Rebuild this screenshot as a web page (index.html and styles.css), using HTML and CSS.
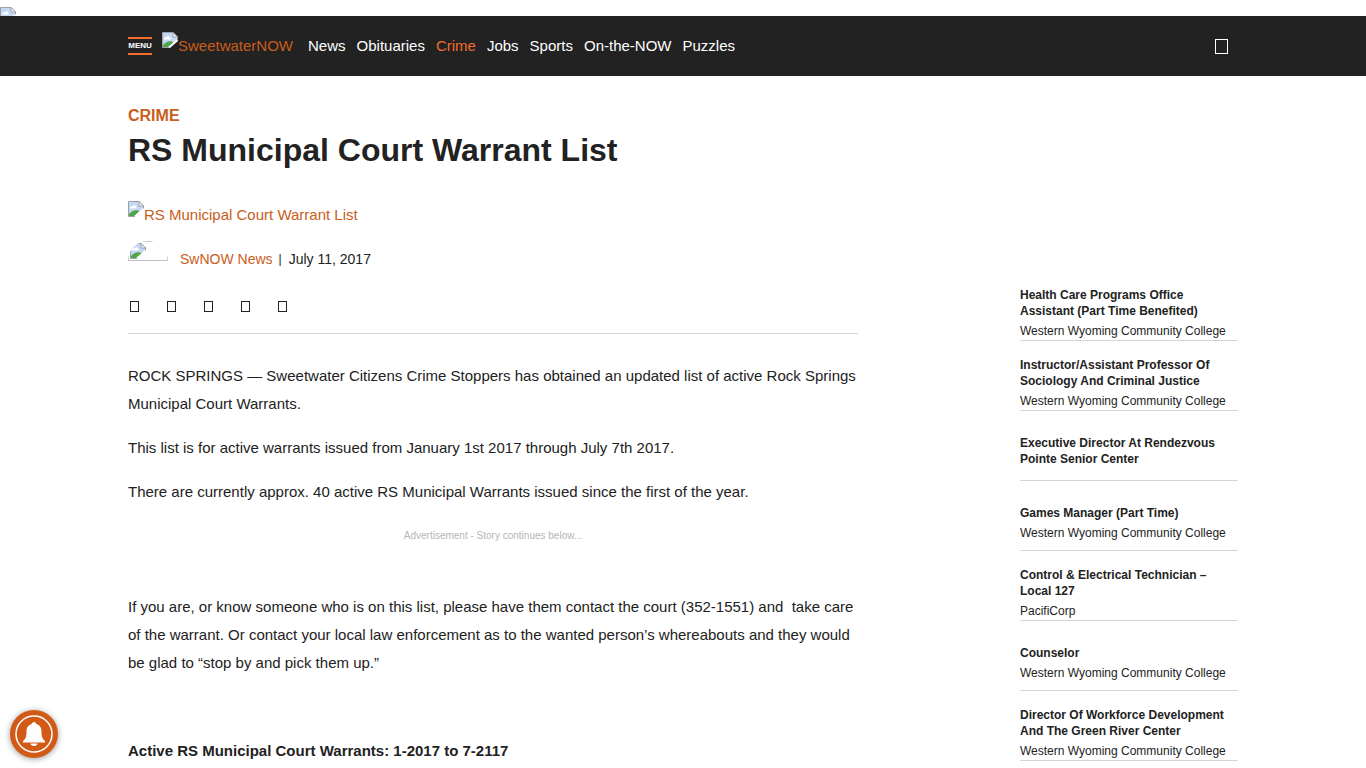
FILE: index.html
```html
<!DOCTYPE html>
<html lang="en">
<head>
<meta charset="utf-8">
<title>RS Municipal Court Warrant List - SweetwaterNOW</title>
<meta name="viewport" content="width=device-width, initial-scale=1">
<link rel="stylesheet" href="styles.css">
</head>
<body>
<svg width="0" height="0" class="defs" aria-hidden="true">
  <symbol id="missing" viewBox="0 0 16 16">
    <path d="M0.500 15.500V0.500H11L15.500 5V15.500Z" fill="#c6d7f5" stroke="#9aa0a6"/>
    <path d="M2 7.500C2 5.500 3.500 5 4.500 5.500C5.500 3.500 8.500 4 8.500 6.500V7.500Z" fill="#fff"/>
    <path d="M1 15V13C4 9.500 7 8.500 10 9.500L13 11V15Z" fill="#4ea64a"/>
    <path d="M7 16L16 7V16Z" fill="var(--back)"/>
    <path d="M7 15.500L15.500 8" stroke="#fff" stroke-width="2"/>
    <path d="M11 0.500V5H15.500Z" fill="#fff" stroke="#9aa0a6"/>
  </symbol>
</svg>
<div class="banner"><svg class="missing"><use href="#missing"/></svg></div>
<header class="topbar">
  <div class="container topbar-inner">
    <button class="menu" type="button">MENU</button>
    <a class="logo" href="#"><svg class="missing"><use href="#missing"/></svg>SweetwaterNOW</a>
    <nav class="nav" aria-label="Main">
      <a href="#">News</a>
      <a href="#">Obituaries</a>
      <a class="current" href="#">Crime</a>
      <a href="#">Jobs</a>
      <a href="#">Sports</a>
      <a href="#">On-the-NOW</a>
      <a href="#">Puzzles</a>
    </nav>
    <button class="search" type="button" aria-label="Search"><span class="glyph glyph-large"></span></button>
  </div>
</header>
<div class="container page">
  <main class="article">
    <a class="category" href="#">CRIME</a>
    <h1>RS Municipal Court Warrant List</h1>
    <a class="feature" href="#"><svg class="missing"><use href="#missing"/></svg>RS Municipal Court Warrant List</a>
    <div class="byline">
      <span class="avatar"><span class="avatar-frame"><svg class="missing"><use href="#missing"/></svg></span></span>
      <a href="#">SwNOW News</a>
      <span class="bar">|</span>
      <time datetime="2017-07-11">July 11, 2017</time>
    </div>
    <div class="share">
      <a href="#" aria-label="Facebook"><span class="glyph"></span></a>
      <a href="#" aria-label="Twitter"><span class="glyph"></span></a>
      <a href="#" aria-label="LinkedIn"><span class="glyph"></span></a>
      <a href="#" aria-label="Email"><span class="glyph"></span></a>
      <a href="#" aria-label="Print"><span class="glyph"></span></a>
    </div>
    <div class="story">
      <p>ROCK SPRINGS — Sweetwater Citizens Crime Stoppers has obtained an updated list of active Rock Springs Municipal Court Warrants.</p>
      <p>This list is for active warrants issued from January 1st 2017 through July 7th 2017.</p>
      <p>There are currently approx. 40 active RS Municipal Warrants issued since the first of the year.</p>
      <div class="ad">Advertisement - Story continues below...</div>
      <p>If you are, or know someone who is on this list, please have them contact the court (352-1551) and &nbsp;take care of the warrant. Or contact your local law enforcement as to the wanted person’s whereabouts and they would be glad to “stop by and pick them up.”</p>
      <p>&nbsp;</p>
      <p><strong>Active RS Municipal Court Warrants: 1-2017 to 7-2117</strong></p>
    </div>
  </main>
  <aside class="jobs" aria-label="Jobs">
    <a class="job" href="#"><strong>Health Care Programs Office Assistant (Part Time Benefited)</strong><span>Western Wyoming Community College</span></a>
    <a class="job" href="#"><strong>Instructor/Assistant Professor Of Sociology And Criminal Justice</strong><span>Western Wyoming Community College</span></a>
    <a class="job" href="#"><strong>Executive Director At Rendezvous Pointe Senior Center</strong><span></span></a>
    <a class="job" href="#"><strong>Games Manager (Part Time)</strong><span>Western Wyoming Community College</span></a>
    <a class="job" href="#"><strong>Control &amp; Electrical Technician – Local 127</strong><span>PacifiCorp</span></a>
    <a class="job" href="#"><strong>Counselor</strong><span>Western Wyoming Community College</span></a>
    <a class="job" href="#"><strong>Director Of Workforce Development And The Green River Center</strong><span>Western Wyoming Community College</span></a>
  </aside>
</div>
<button class="bell" type="button" aria-label="Notifications">
  <svg viewBox="0 0 48 48" width="48" height="48">
    <circle cx="24" cy="24" r="18" fill="none" stroke="#fff" stroke-width="1.500"/>
    <path d="M24 12C25.500 12 26 13 26.200 14C30 15 31.500 18 31.500 21.500C31.500 27 32.500 29 35 31V32.500H13V31C15.500 29 16.500 27 16.500 21.500C16.500 18 18 15 21.800 14C22 13 22.500 12 24 12Z" fill="#fff"/>
    <path d="M20.500 33.500H27.500C27.500 35 26 36 24 36S20.500 35 20.500 33.500Z" fill="#fff"/>
  </svg>
</button>
</body>
</html>
```
FILE: styles.css
```css
* { box-sizing: border-box; }
body {
  --back: #fff;
  margin: 0;
  font: 15px/28px "Liberation Sans", Arial, sans-serif;
  color: #222;
  background: var(--back);
}
a { color: #c95d1a; text-decoration: none; }
button { padding: 0; border: 0; background: none; font-family: inherit; cursor: pointer; }
.defs { position: absolute; }
.missing { display: block; flex: none; width: 16px; height: 16px; }
.container { width: 100%; max-width: 1110px; margin: 0 auto; }

.banner { height: 16px; padding-top: 7px; overflow: hidden; }
.topbar { --back: #222; background: var(--back); }
.topbar-inner { display: flex; align-items: center; height: 60px; }
.menu {
  width: 24px;
  height: 18px;
  border: solid #f26c2a;
  border-width: 2px 0;
  color: #fff;
  font-size: 8px;
  font-weight: bold;
  line-height: 14px;
}
.logo { display: flex; margin-left: 10px; line-height: 28px; }
.nav { display: flex; flex: 1; gap: 11px; margin-left: 15px; }
.nav a { color: #fff; }
.nav .current { color: #f26c2a; }
.search { padding: 0 10px; }
.glyph { display: block; width: 9px; height: 11px; border: 1px solid #222; }
.glyph-large { width: 13px; height: 15px; border-color: #fff; }

.page { display: flex; justify-content: space-between; }
.article { flex: 0 1 730px; padding-top: 28px; }
.category { display: block; font-size: 16px; font-weight: bold; line-height: 24px; }
h1 { margin: 2px 0 31px; font-size: 32px; line-height: 40px; }
.feature { display: flex; }
.byline { display: flex; align-items: flex-start; margin-top: 12px; font-size: 14px; line-height: 36px; }
.avatar {
  width: 40px;
  height: 20px;
  margin-right: 12px;
  border-radius: 20px 20px 0 0;
  overflow: hidden;
}
.avatar-frame { display: block; height: 20px; padding: 1px; border: 1px solid #c0c0c0; }
.bar { margin: 0 7px 0 6px; font-size: 12px; }
.share { display: flex; gap: 28px; margin-top: 24px; padding: 0 2px 21px; border-bottom: 1px solid #d5d5d5; }
.story { padding-top: 28px; }
.story p { margin: 0 0 16px; }
.ad { margin-bottom: 43px; color: #b5b5b5; font-size: 10px; text-align: center; }

.jobs { flex: 0 0 218px; padding-top: 195px; }
.job {
  display: flex;
  flex-direction: column;
  justify-content: center;
  min-height: 70px;
  padding: 15px 0 1px;
  border-bottom: 1px solid #d5d5d5;
  color: #222;
  font-size: 12px;
  line-height: 16px;
}
.job span { margin-top: 4px; }

.bell {
  position: fixed;
  left: 10px;
  bottom: 10px;
  width: 48px;
  height: 48px;
  border-radius: 50%;
  background: #d15a17;
  box-shadow: 0 1px 6px rgba(0, 0, 0, .4);
}
.bell svg { display: block; }
```
